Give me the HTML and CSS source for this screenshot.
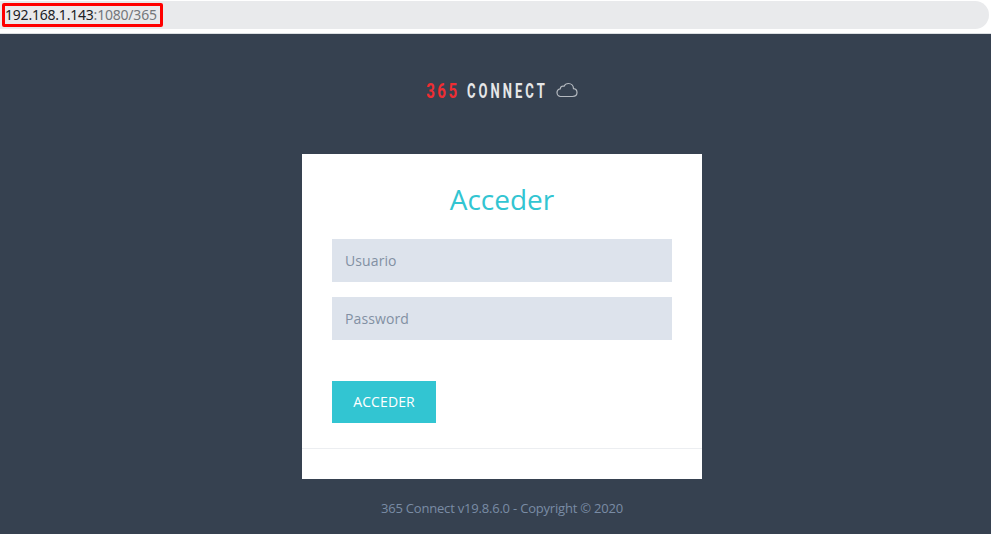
FILE: index.html
```html
<!DOCTYPE html>
<html lang="es">
<head>
<meta charset="utf-8">
<title>365 Connect</title>
<link rel="stylesheet" href="styles.css">
</head>
<body>
<header class="browser-bar">
  <div class="address"><span class="url"><span class="host">192.168.1.143</span><span class="path">:1080/365</span></span></div>
</header>
<main class="page">
  <div class="logo">
    <svg width="154" height="24" viewBox="0 0 154 24" role="img" aria-label="365 Connect">
      <g class="logo-text">
        <text class="logo-number" transform="translate(1.2 19) scale(.72 1)" textLength="43" lengthAdjust="spacing">365</text>
        <text class="logo-name" transform="translate(42 19) scale(.62 1)" textLength="125.500" lengthAdjust="spacing">CONNECT</text>
      </g>
      <path class="cloud" d="M135.500 17.500H147.500c2.700 0 4.500-1.600 4.500-3.900 0-2.200-1.500-3.700-3.500-3.900-.1-3.100-2.300-5.200-5-5.200-2.100 0-3.700 1.100-4.500 2.800-2-.7-3.500.5-3.700 2.500-1.900.3-3.300 1.900-3.300 3.800 0 2.200 1.700 3.900 3.500 3.900z"/>
    </svg>
  </div>
  <section class="card">
    <form class="login">
      <h1 class="title">Acceder</h1>
      <input class="field" type="text" placeholder="Usuario" aria-label="Usuario">
      <input class="field" type="password" placeholder="Password" aria-label="Password">
      <button class="submit" type="button">ACCEDER</button>
    </form>
    <div class="card-footer"></div>
  </section>
  <footer class="copyright">365 Connect v19.8.6.0 - Copyright © 2020</footer>
</main>
</body>
</html>
```
FILE: styles.css
```css
* { box-sizing: border-box; }
body {
  margin: 0;
  height: 534px;
  overflow: hidden;
  background: #364150;
  font-family: "Open Sans", sans-serif;
}
.browser-bar {
  height: 34px;
  padding-top: 1px;
  background: #fff;
  border-bottom: 1px solid #dcdfe2;
}
.address {
  width: 989px;
  height: 28px;
  padding: 2px 0 0 2px;
  background: #e9eaec;
  border-radius: 0 14px 14px 0;
}
.url {
  display: block;
  width: 161px;
  height: 24px;
  border: 3px solid #f00;
  border-radius: 2px;
  font: 14px/18px "Noto Sans", sans-serif;
  letter-spacing: -.21px;
  white-space: nowrap;
}
.host { color: #202124; }
.path { color: #74777b; }
.page { padding-left: 13px; }
.logo {
  display: flex;
  width: 154px;
  height: 24px;
  margin: 45px auto 51px;
}
.logo-text {
  font: 700 21px Roboto, sans-serif;
}
.logo-number { fill: #f02d32; }
.logo-name { fill: #e6e7e8; }
.cloud {
  fill: none;
  stroke: #b5bac0;
  stroke-width: 1.2;
}
.card {
  width: 400px;
  height: 325px;
  margin: 0 auto;
  background: #fff;
}
.login {
  display: flex;
  flex-direction: column;
  align-items: flex-start;
  height: 294px;
  padding: 25px 30px 0;
}
.title {
  width: 100%;
  height: 40px;
  margin: 0 0 20px;
  color: #32c5d2;
  font-size: 28px;
  font-weight: 400;
  line-height: 40px;
  text-align: center;
}
.field {
  width: 100%;
  height: 43px;
  margin: 0 0 15px;
  padding: 0 13px;
  border: 0;
  background: #dde3ec;
  font: 14px "Open Sans", sans-serif;
  letter-spacing: .1px;
}
.field::placeholder { color: #8290a3; opacity: 1; }
.submit {
  width: 104px;
  height: 42px;
  margin-top: 26px;
  padding: 0 0 2px;
  border: 0;
  background: #32c5d2;
  color: #fff;
  font: 500 14px "Open Sans", sans-serif;
  letter-spacing: .1px;
}
.card-footer {
  height: 31px;
  border-top: 1px solid #eceef1;
}
.copyright {
  margin-top: 19px;
  color: #7a8ca5;
  font-size: 13px;
  line-height: 20px;
  letter-spacing: -.2px;
  text-align: center;
}
```
